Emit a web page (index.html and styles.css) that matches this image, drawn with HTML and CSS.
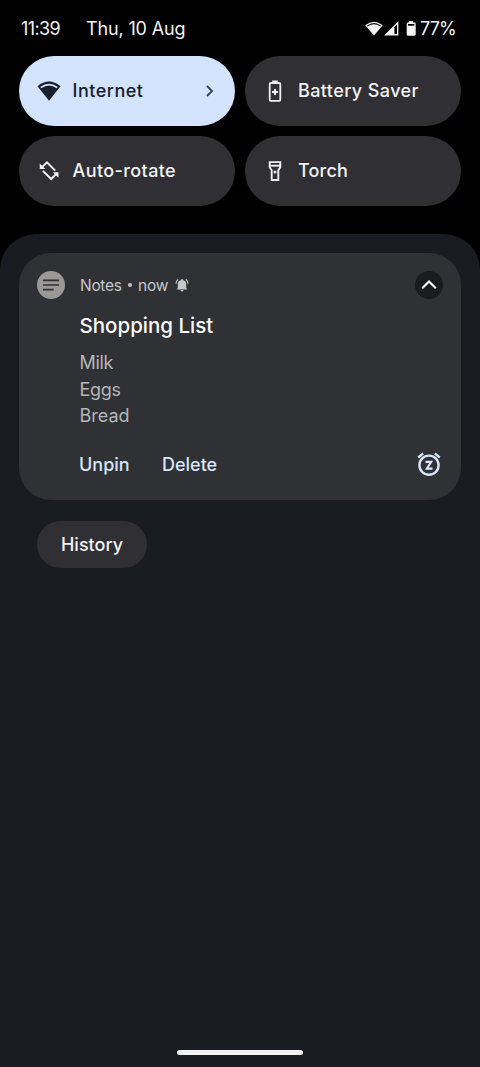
FILE: index.html
```html
<!DOCTYPE html>
<html lang="en">
<head>
<meta charset="utf-8">
<title>Notifications</title>
<link rel="stylesheet" href="styles.css">
</head>
<body>
<div class="screen">
  <header class="status">
    <span class="clock">11:39</span>
    <span class="date">Thu, 10 Aug</span>
    <svg class="status-icons" width="53" height="18" viewBox="0 0 53 18">
      <path d="M.2 5.2Q9-1.8 17.8 5.2L9 15.6Z" fill="#f4f4f4"/>
      <path d="M2.3 6.1Q9 1.2 15.7 6.1" fill="none" stroke="#000" stroke-width="1.1"/>
      <path d="M19 15.4L33.4 1.2V15.4Z" fill="#f4f4f4"/>
      <path d="M29.4 7.2L32 4.6V14H29.4Z" fill="#000"/>
      <path d="M43.8 1H48V2.4H49.4Q50.7 2.4 50.7 3.7V14.5Q50.7 15.8 49.4 15.8H43Q41.7 15.8 41.7 14.5V3.7Q41.7 2.4 43 2.4H43.8Z" fill="#f4f4f4"/>
      <path d="M43 4H49.4V5.7H43Z" fill="#000"/>
    </svg>
    <span class="percent">77%</span>
  </header>

  <section class="tiles">
    <div class="tile tile-on">
      <svg class="tile-icon" width="24" height="24" viewBox="0 0 24 24">
        <path d="M.5 7.2Q12-2 23.5 7.2L12 21.8Z" fill="#17202b"/>
        <path d="M3.2 7.9Q12 1.8 20.8 7.9L19.7 9.3Q12 3.8 4.3 9.3Z" fill="#d3e3fd"/>
      </svg>
      <span class="tile-label internet">Internet</span>
      <svg class="chevron" width="10" height="14" viewBox="0 0 10 14"><path d="M2 2L7 7L2 12" fill="none" stroke="#35404e" stroke-width="1.8"/></svg>
    </div>
    <div class="tile">
      <svg class="tile-icon" width="24" height="24" viewBox="0 0 24 24" fill="none" stroke="#f0eff5" stroke-width="1.8">
        <rect x="6.7" y="4" width="10.6" height="17.8" rx="1"/>
        <path d="M9.2 2.6H14.8" stroke-width="2.2"/>
        <path d="M12 10V16M9 13H15" stroke-width="2"/>
      </svg>
      <span class="tile-label battery">Battery Saver</span>
    </div>
    <div class="tile">
      <svg class="tile-icon" width="24" height="24" viewBox="0 0 24 24" fill="none" stroke="#f4f4f6" stroke-width="2">
        <path d="M4.8 8.4L10 3.3L18.2 11.6"/>
        <path d="M19.4 14.9L14.2 20L5.9 11.9"/>
        <path d="M2.7 4.6V10H8.3ZM21.5 18.7V13.3H15.9Z" fill="#f4f4f6" stroke="none"/>
      </svg>
      <span class="tile-label rotate">Auto-rotate</span>
    </div>
    <div class="tile">
      <svg class="tile-icon" width="24" height="24" viewBox="0 0 24 24" fill="none" stroke="#f0eff5" stroke-width="1.9">
        <path d="M6.7 3.1H17.3V8.3L15.3 11.3V21H8.7V11.3L6.7 8.3Z"/>
        <path d="M6.7 6.7H17.3"/>
        <circle cx="12" cy="13" r="1.5" fill="#f0eff5" stroke="none"/>
      </svg>
      <span class="tile-label torch">Torch</span>
    </div>
  </section>

  <main class="shade">
    <article class="card">
      <div class="card-head">
        <svg width="28" height="28" viewBox="0 0 28 28">
          <circle cx="14" cy="14" r="14" fill="#999896"/>
          <path d="M6 9.4H22M6 14H22M6 18.6H16.7" stroke="#303135" stroke-width="1.7"/>
        </svg>
        <span class="app">Notes</span><span class="dot"></span><span class="when">now</span>
        <svg class="bell" width="14" height="14" viewBox="0 0 14 14" fill="#c7c7ca">
          <path d="M2.8 10V6Q2.8 2.9 5.9 2.2V1.7Q7 .3 8.1 1.7V2.2Q11.2 2.9 11.2 6V10L12.4 11.4H1.6L2.8 10ZM5.5 12H8.5Q8.2 13.6 7 13.6T5.5 12Z"/>
          <path d="M1 5.8Q1.1 2.9 3.2 1.2M13 5.8Q12.9 2.9 10.8 1.2" fill="none" stroke="#c7c7ca" stroke-width="1.1"/>
        </svg>
        <svg class="collapse" width="28" height="28" viewBox="0 0 28 28">
          <circle cx="14" cy="14" r="14" fill="#1a1b1f"/>
          <path d="M7.2 17.2L14 10.4L20.8 17.2" fill="none" stroke="#fff" stroke-width="2.1"/>
        </svg>
      </div>
      <div class="card-body">
        <h1 class="title">Shopping List</h1>
        <p class="line milk">Milk</p>
        <p class="line eggs">Eggs</p>
        <p class="line bread">Bread</p>
      </div>
      <div class="actions">
        <span class="action unpin">Unpin</span>
        <span class="action delete">Delete</span>
        <svg class="snooze" width="26" height="26" viewBox="0 0 26 26" fill="none" stroke="#d8e4fb">
          <circle cx="13" cy="14.2" r="9.6" stroke-width="2.4"/>
          <path d="M2.2 6.5L7.2 2.4M23.8 6.5L18.8 2.4" stroke-width="2.4"/>
          <path d="M9.5 10.9H15.2L10.8 17.6H16.5" stroke-width="2.1"/>
        </svg>
      </div>
    </article>
    <div class="history"><span class="history-label">History</span></div>
    <div class="handle"></div>
  </main>
</div>
</body>
</html>
```
FILE: styles.css
```css
* { box-sizing: border-box; }
body { margin: 0; background: #000; }
.screen {
  width: 480px;
  height: 1067px;
  display: flex;
  flex-direction: column;
  overflow: hidden;
  background: #000;
  color: #f3f3f5;
  font-family: Inter, "Open Sans", sans-serif;
  white-space: nowrap;
}
.status {
  height: 56px;
  display: flex;
  align-items: center;
  padding: 1px 24px 0 21px;
  font-size: 18px;
  line-height: 24px;
}
.clock { width: 65px; letter-spacing: -.6px; }
.date { letter-spacing: -.15px; }
.status-icons { margin: 0 2px 0 auto; }
.percent { width: 36px; letter-spacing: -.9px; }
.tiles {
  height: 178px;
  display: grid;
  grid-template-columns: 216px 216.5px;
  grid-template-rows: 70px 70px;
  gap: 10px 9.5px;
  padding-left: 19px;
}
.tile {
  display: flex;
  align-items: center;
  padding: 0 20.5px 0 18px;
  border-radius: 35px;
  background: #303034;
}
.tile-on { background: #d3e3fd; color: #17202b; }
.tile-icon { margin-right: 11.5px; flex: none; }
.tile-label { font-size: 18px; font-weight: 500; line-height: 24px; }
.internet { letter-spacing: .5px; }
.battery, .rotate { letter-spacing: .4px; }
.torch { letter-spacing: .2px; }
.chevron { margin-left: auto; }
.shade {
  flex: 1;
  display: flex;
  flex-direction: column;
  padding: 18.5px 19px 0;
  border-radius: 36px 36px 0 0;
  background: #191c20;
}
.card {
  height: 247.5px;
  padding: 18.5px 18.5px 0 18px;
  border-radius: 32px;
  background: #303135;
}
.card-head {
  height: 28px;
  display: flex;
  align-items: center;
  color: #c7c7ca;
  font-size: 15.5px;
}
.app { margin-left: 15px; width: 43px; letter-spacing: -.3px; }
.dot { width: 4px; height: 4px; margin: 0 6px 0 5px; border-radius: 50%; background: #c7c7ca; }
.when { width: 31px; letter-spacing: -.2px; }
.bell { margin-left: 6px; }
.collapse { margin-left: auto; }
.card-body { padding: 13px 0 0 42.5px; }
.title { margin: 0 0 10px; font-size: 20.5px; font-weight: 500; line-height: 28px; color: #fafafa; }
.line { margin: 0; color: #b5b6ba; font-size: 18px; line-height: 26.7px; }
.milk, .eggs { letter-spacing: -.3px; }
.actions {
  display: flex;
  align-items: center;
  height: 28px;
  margin: 20px .5px 0 42px;
  color: #d8e4fb;
  font-size: 18px;
  font-weight: 500;
}
.action { padding-top: 1px; }
.unpin { width: 83px; }
.snooze { margin-left: auto; }
.history {
  width: 110px;
  height: 47px;
  display: flex;
  align-items: center;
  justify-content: center;
  margin: 21px 0 0 18px;
  border-radius: 24px;
  background: #303034;
  font-size: 18px;
  font-weight: 500;
}
.handle {
  width: 126px;
  height: 5px;
  margin: auto auto 12px;
  border-radius: 3px;
  background: #f2f3f2;
}
```
